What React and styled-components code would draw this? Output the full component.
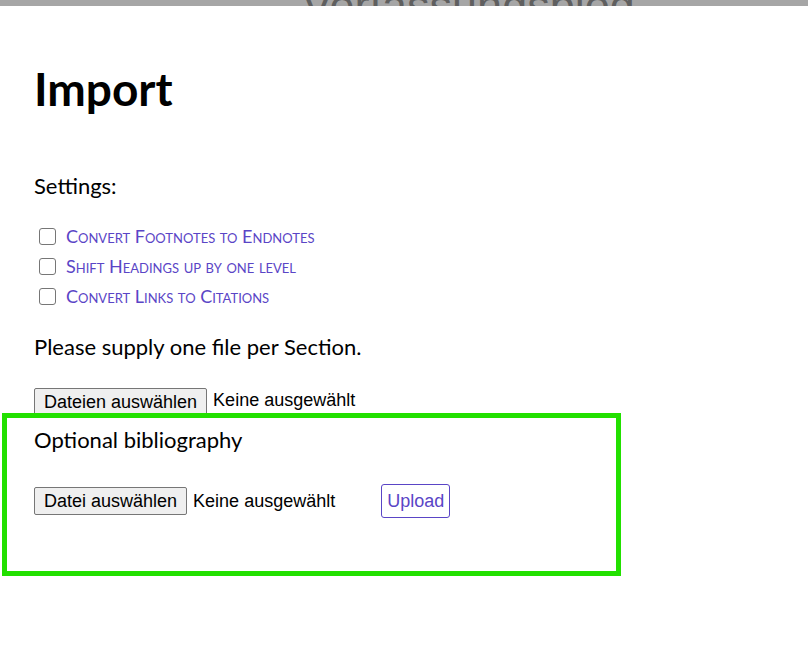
import React from "react";
import styled, { createGlobalStyle } from "styled-components";

const GlobalStyle = createGlobalStyle`
  html, body {
    margin: 0;
    padding: 0;
    background: #fff;
  }
  body {
    font-family: Lato, "Noto Sans", sans-serif;
    color: #000;
  }
`;

const TopBar = styled.header`
  height: 6px;
  overflow: hidden;
  background: #a6a6a6;
  display: flex;
  padding-left: 302px;
`;

const SiteName = styled.div`
  margin-top: -17px;
  font-family: "Liberation Sans", Arial, sans-serif;
  font-size: 45px;
  line-height: 45px;
  color: #5f5f5f;
  white-space: nowrap;
`;

const Page = styled.main`
  display: flex;
  flex-direction: column;
`;

const Section = styled.div`
  padding-left: 34px;
  display: flex;
  flex-direction: column;
`;

const Title = styled.h1`
  margin: 53px 0 0;
  font-size: 46px;
  font-weight: 700;
  line-height: 60px;
`;

const Text = styled.p`
  margin: ${(p) => p.$top || 0}px 0 0;
  font-size: 22px;
  line-height: 27px;
`;

const OptionList = styled.div`
  display: flex;
  flex-direction: column;
  margin-top: 22px;
`;

const OptionRow = styled.label`
  display: flex;
  align-items: center;
  height: 30px;
  gap: 10px;
  padding-left: 5px;
`;

const Checkbox = styled.input.attrs({ type: "checkbox" })`
  appearance: none;
  margin: 0;
  width: 17px;
  height: 17px;
  border: 1.5px solid #767676;
  border-radius: 3px;
  background: #fff;
`;

const OptionText = styled.span`
  font-variant: small-caps;
  font-size: 18px;
  color: #5a45c6;
`;

const FileRow = styled.div`
  display: flex;
  align-items: center;
  height: ${(p) => p.$height}px;
  overflow: hidden;
  margin-top: ${(p) => p.$top}px;
  font-family: "Liberation Sans", Arial, sans-serif;
  font-size: 18px;
`;

const PickButton = styled.button`
  font: inherit;
  height: 28px;
  padding: 0 9px;
  color: #000;
  background: #efefef;
  border: 1px solid #767676;
  border-radius: 2px;
  flex-shrink: 0;
  align-self: ${(p) => (p.$centered ? "center" : "flex-start")};
`;

const FileName = styled.span`
  margin-left: 6px;
  white-space: nowrap;
`;

const UploadButton = styled.button`
  font: inherit;
  margin-left: 46px;
  height: 34px;
  padding: 0 5px;
  color: #5a45c6;
  background: #fff;
  border: 1px solid #5a45c6;
  border-radius: 3px;
`;

const Bibliography = styled.section`
  margin-left: 2px;
  width: 619px;
  height: 163px;
  box-sizing: border-box;
  border: 5px solid #22e000;
  padding: 8px 27px 0;
`;

export default function App() {
  return (
    <>
      <GlobalStyle />
      <TopBar>
        <SiteName>Verfassungsblog</SiteName>
      </TopBar>
      <Page>
        <Section>
          <Title>Import</Title>
          <Text $top={53}>Settings:</Text>
          <OptionList>
            <OptionRow>
              <Checkbox />
              <OptionText>Convert Footnotes to Endnotes</OptionText>
            </OptionRow>
            <OptionRow>
              <Checkbox />
              <OptionText>Shift Headings up by one level</OptionText>
            </OptionRow>
            <OptionRow>
              <Checkbox />
              <OptionText>Convert Links to Citations</OptionText>
            </OptionRow>
          </OptionList>
          <Text $top={22}>Please supply one file per Section.</Text>
          <FileRow $top={28} $height={25}>
            <PickButton>Dateien auswählen</PickButton>
            <FileName>Keine ausgewählt</FileName>
          </FileRow>
        </Section>
        <Bibliography>
          <Text>Optional bibliography</Text>
          <FileRow $top={31} $height={34}>
            <PickButton $centered>Datei auswählen</PickButton>
            <FileName>Keine ausgewählt</FileName>
            <UploadButton>Upload</UploadButton>
          </FileRow>
        </Bibliography>
      </Page>
    </>
  );
}
